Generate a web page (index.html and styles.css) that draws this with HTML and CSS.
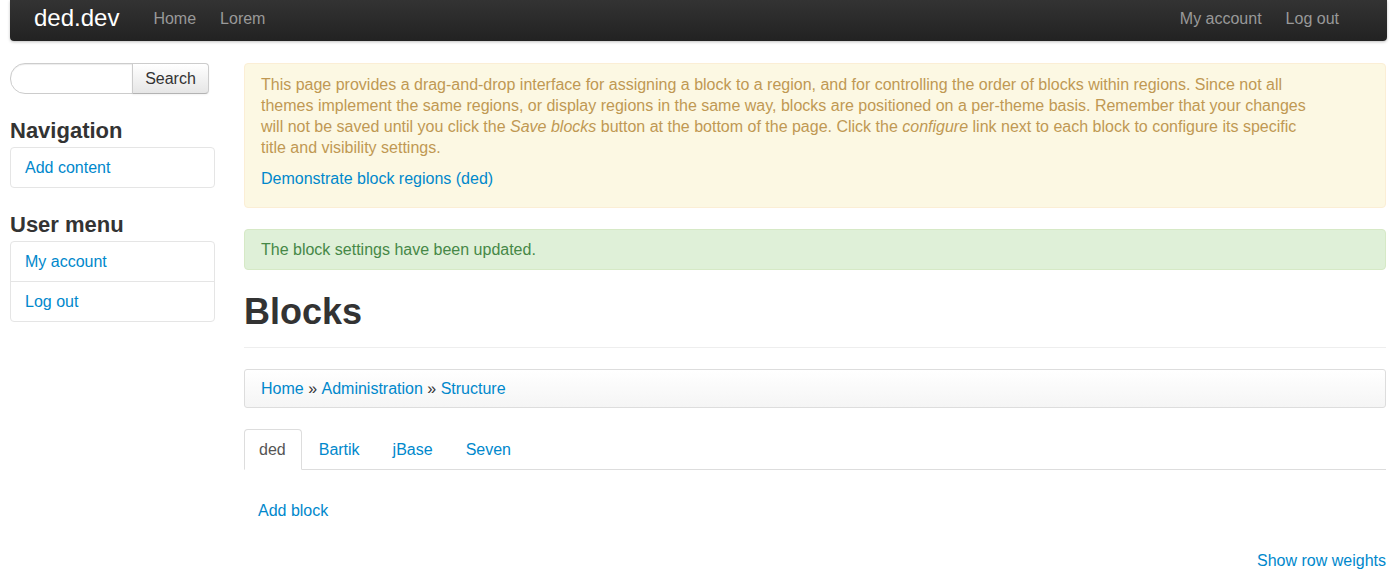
FILE: index.html
```html
<!DOCTYPE html>
<html lang="en">
<head>
  <meta charset="UTF-8" />
  <title>Blocks | ded.dev</title>
  <link rel="stylesheet" href="styles.css">
</head>
<body>
  <!-- Top navbar -->
  <header class="navbar">
    <a class="brand" href="#">ded.dev</a>
    <ul class="nav">
      <li><a href="#">Home</a></li>
      <li><a href="#">Lorem</a></li>
    </ul>
    <ul class="nav nav-right">
      <li><a href="#">My account</a></li>
      <li><a href="#">Log out</a></li>
    </ul>
  </header>

  <div class="layout">
    <!-- Sidebar -->
    <aside class="sidebar">
      <form class="search">
        <input type="text" class="search-input" />
        <button type="button" class="btn">Search</button>
      </form>

      <h2 class="block-title">Navigation</h2>
      <ul class="menu-list">
        <li><a href="#">Add content</a></li>
      </ul>

      <h2 class="block-title">User menu</h2>
      <ul class="menu-list">
        <li><a href="#">My account</a></li>
        <li><a href="#">Log out</a></li>
      </ul>
    </aside>

    <!-- Main content -->
    <main class="content">
      <div class="alert alert-help">
        <p>This page provides a drag-and-drop interface for assigning a block to a region, and for controlling the order of blocks within regions. Since not all themes implement the same regions, or display regions in the same way, blocks are positioned on a per-theme basis. Remember that your changes will not be saved until you click the <em>Save blocks</em> button at the bottom of the page. Click the <em>configure</em> link next to each block to configure its specific title and visibility settings.</p>
        <p><a href="#">Demonstrate block regions (ded)</a></p>
      </div>

      <div class="alert alert-success">The block settings have been updated.</div>

      <h1 class="page-title">Blocks</h1>

      <ul class="breadcrumb">
        <li><a href="#">Home</a> &raquo; </li>
        <li><a href="#">Administration</a> &raquo; </li>
        <li><a href="#">Structure</a></li>
      </ul>

      <ul class="tabs">
        <li class="active"><a href="#">ded</a></li>
        <li><a href="#">Bartik</a></li>
        <li><a href="#">jBase</a></li>
        <li><a href="#">Seven</a></li>
      </ul>

      <ul class="action-links">
        <li><a href="#">Add block</a></li>
      </ul>

      <div class="row-weights"><a href="#">Show row weights</a></div>
    </main>
  </div>
</body>
</html>
```

FILE: styles.css
```css
body {
  margin: 0;
  font-family: "Liberation Sans", Arial, sans-serif;
  font-size: 16px;
  line-height: 21px;
  color: #333;
  background: #fff;
}
a {
  color: #0088cc;
  text-decoration: none;
}
ul {
  list-style: none;
  margin: 0;
  padding: 0;
}

/* Navbar */
.navbar {
  display: flex;
  align-items: center;
  height: 41px;
  margin: 0 10px;
  padding: 0 24px;
  background: linear-gradient(#333, #222);
  border-radius: 0 0 4px 4px;
  box-shadow: 0 1px 3px rgba(0, 0, 0, 0.25);
}
.brand {
  color: #fff;
  font-size: 24px;
  margin-right: 22px;
  padding-bottom: 6px;
}
.nav {
  display: flex;
  gap: 24px;
  margin-left: 12px;
}
.nav a {
  color: #999;
  font-size: 16px;
  padding-bottom: 5px;
  display: block;
}
.nav-right {
  margin-left: auto;
  padding-right: 24px;
}

/* Page grid */
.layout {
  display: grid;
  grid-template-columns: 205px 1fr;
  gap: 29px;
  padding: 22px 11px 0 10px;
}

/* Sidebar */
.search {
  display: flex;
  margin: 0 0 24px;
}
.search-input {
  width: 123px;
  height: 31px;
  box-sizing: border-box;
  border: 1px solid #ccc;
  border-radius: 15px 0 0 15px;
  box-shadow: inset 0 1px 1px rgba(0, 0, 0, 0.075);
  padding: 4px 10px;
}
.btn {
  height: 31px;
  width: 77px;
  margin-left: -1px;
  box-sizing: border-box;
  font-family: inherit;
  font-size: 16px;
  color: #333;
  border: 1px solid #ccc;
  border-bottom-color: #b3b3b3;
  border-radius: 0 4px 4px 0;
  background: linear-gradient(#fff, #e6e6e6);
  box-shadow: inset 0 1px 0 rgba(255, 255, 255, 0.2), 0 1px 2px rgba(0, 0, 0, 0.05);
}
.block-title {
  font-size: 22px;
  line-height: 26px;
  margin: 0 0 3px;
  color: #333;
}
.menu-list {
  border: 1px solid #e5e5e5;
  border-radius: 4px;
  margin-bottom: 24px;
}
.menu-list li {
  border-top: 1px solid #e5e5e5;
}
.menu-list li:first-child {
  border-top: 0;
}
.menu-list a {
  display: block;
  padding: 9px 14px;
  line-height: 21px;
}

/* Alerts */
.alert {
  border-radius: 4px;
  padding: 10px 35px 10px 16px;
  margin-bottom: 21px;
}
.alert p {
  margin: 0 0 10px;
}
.alert p:last-child {
  margin-bottom: 8px;
}
.alert-help {
  background: #fcf8e3;
  border: 1px solid #fbeed5;
  color: #c09853;
  padding-right: 64px;
}
.alert-success {
  background: #dff0d8;
  border: 1px solid #d6e9c6;
  color: #468847;
  padding-top: 9px;
  padding-bottom: 9px;
}

/* Title + breadcrumb */
.page-title {
  font-size: 36px;
  line-height: 40px;
  margin: 0 0 21px;
  padding: 1px 0 15px;
  border-bottom: 1px solid #eee;
}
.breadcrumb {
  display: flex;
  padding: 8px 16px;
  border: 1px solid #ddd;
  border-radius: 3px;
  background: linear-gradient(#fff, #f5f5f5);
  box-shadow: inset 0 1px 0 #fff;
  margin-bottom: 21px;
}
.breadcrumb li {
  white-space: pre;
}

/* Theme tabs */
.tabs {
  display: flex;
  border-bottom: 1px solid #ddd;
}
.tabs li {
  margin-bottom: -1px;
}
.tabs a {
  display: block;
  padding: 9px 15px 9px 14px;
  border: 1px solid transparent;
  border-radius: 4px 4px 0 0;
  margin-right: 2px;
}
.tabs .active a {
  color: #555;
  background: #fff;
  border-color: #ddd #ddd transparent;
}

.action-links {
  padding: 30px 14px 0;
}
.row-weights {
  text-align: right;
  margin-top: 29px;
}
```
